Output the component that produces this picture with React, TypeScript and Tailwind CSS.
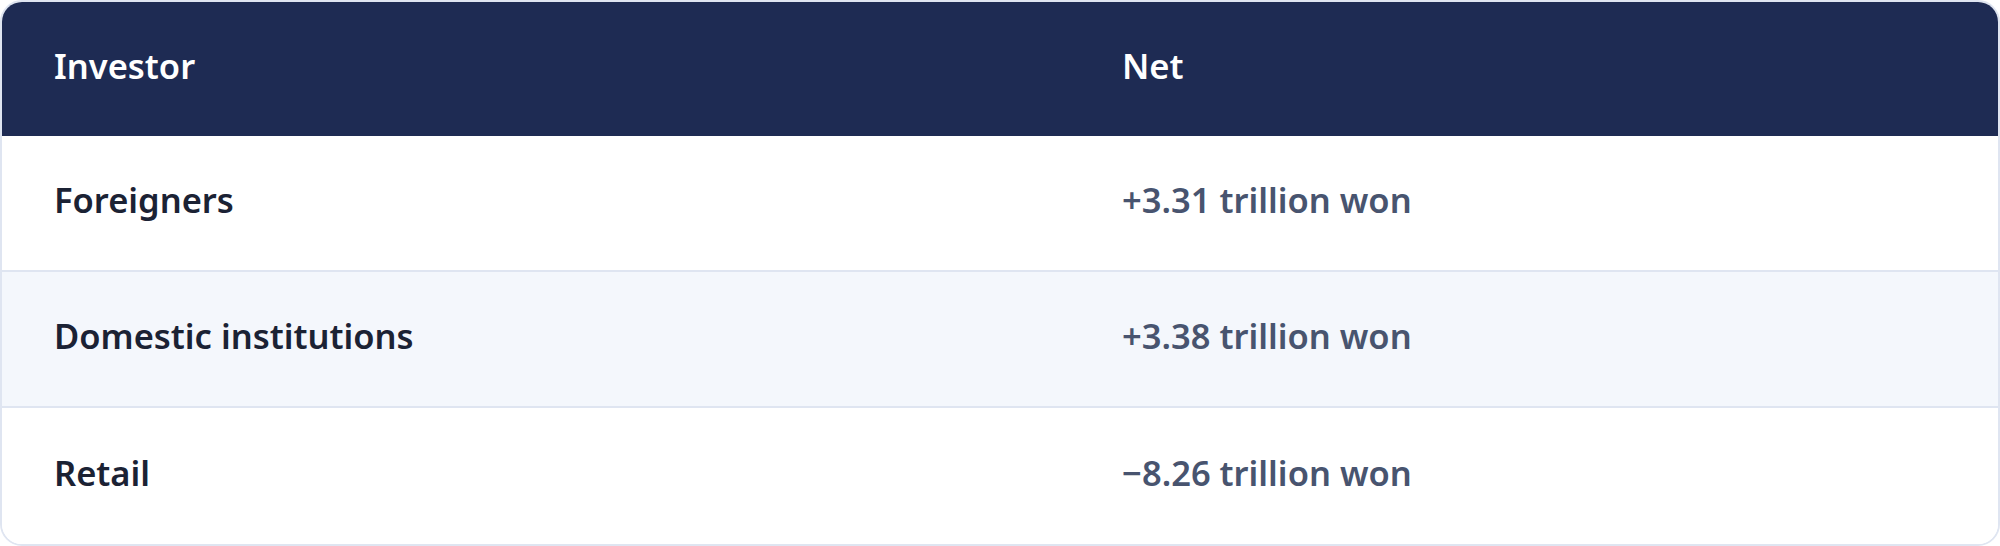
import React from "react";

type Row = { investor: string; net: string };

const rows: Row[] = [
  { investor: "Foreigners", net: "+3.31 trillion won" },
  { investor: "Domestic institutions", net: "+3.38 trillion won" },
  { investor: "Retail", net: "\u22128.26 trillion won" },
];

export default function App(): React.ReactElement {
  return (
    <div className="w-[2000px] h-[546px] bg-white" style={{ fontFamily: '"Noto Sans", "Noto Sans CJK KR", sans-serif' }}>
      <div className="w-full h-full border-2 border-[#dfe5f1] rounded-[22px] overflow-hidden flex flex-col">
        <div className="flex h-[134px] shrink-0 items-center bg-[#1e2b53] text-white text-[34.5px] font-semibold pb-[6px]">
          <div className="w-[1066px] pl-[52px]">Investor</div>
          <div className="flex-1 pl-[54px]">Net</div>
        </div>
        {rows.map((r, i) => (
          <div
            key={r.investor}
            className={
              "flex items-center text-[34.5px] font-semibold pb-[6px] " +
              (i === 1 ? "bg-[#f4f7fc] " : "bg-white ") +
              (i < rows.length - 1 ? "h-[136px] border-b-2 border-[#dfe5f1]" : "flex-1")
            }
          >
            <div className="w-[1066px] pl-[52px] text-[#1b2234]">{r.investor}</div>
            <div className="flex-1 pl-[54px] text-[#48546f]">{r.net}</div>
          </div>
        ))}
      </div>
    </div>
  );
}
